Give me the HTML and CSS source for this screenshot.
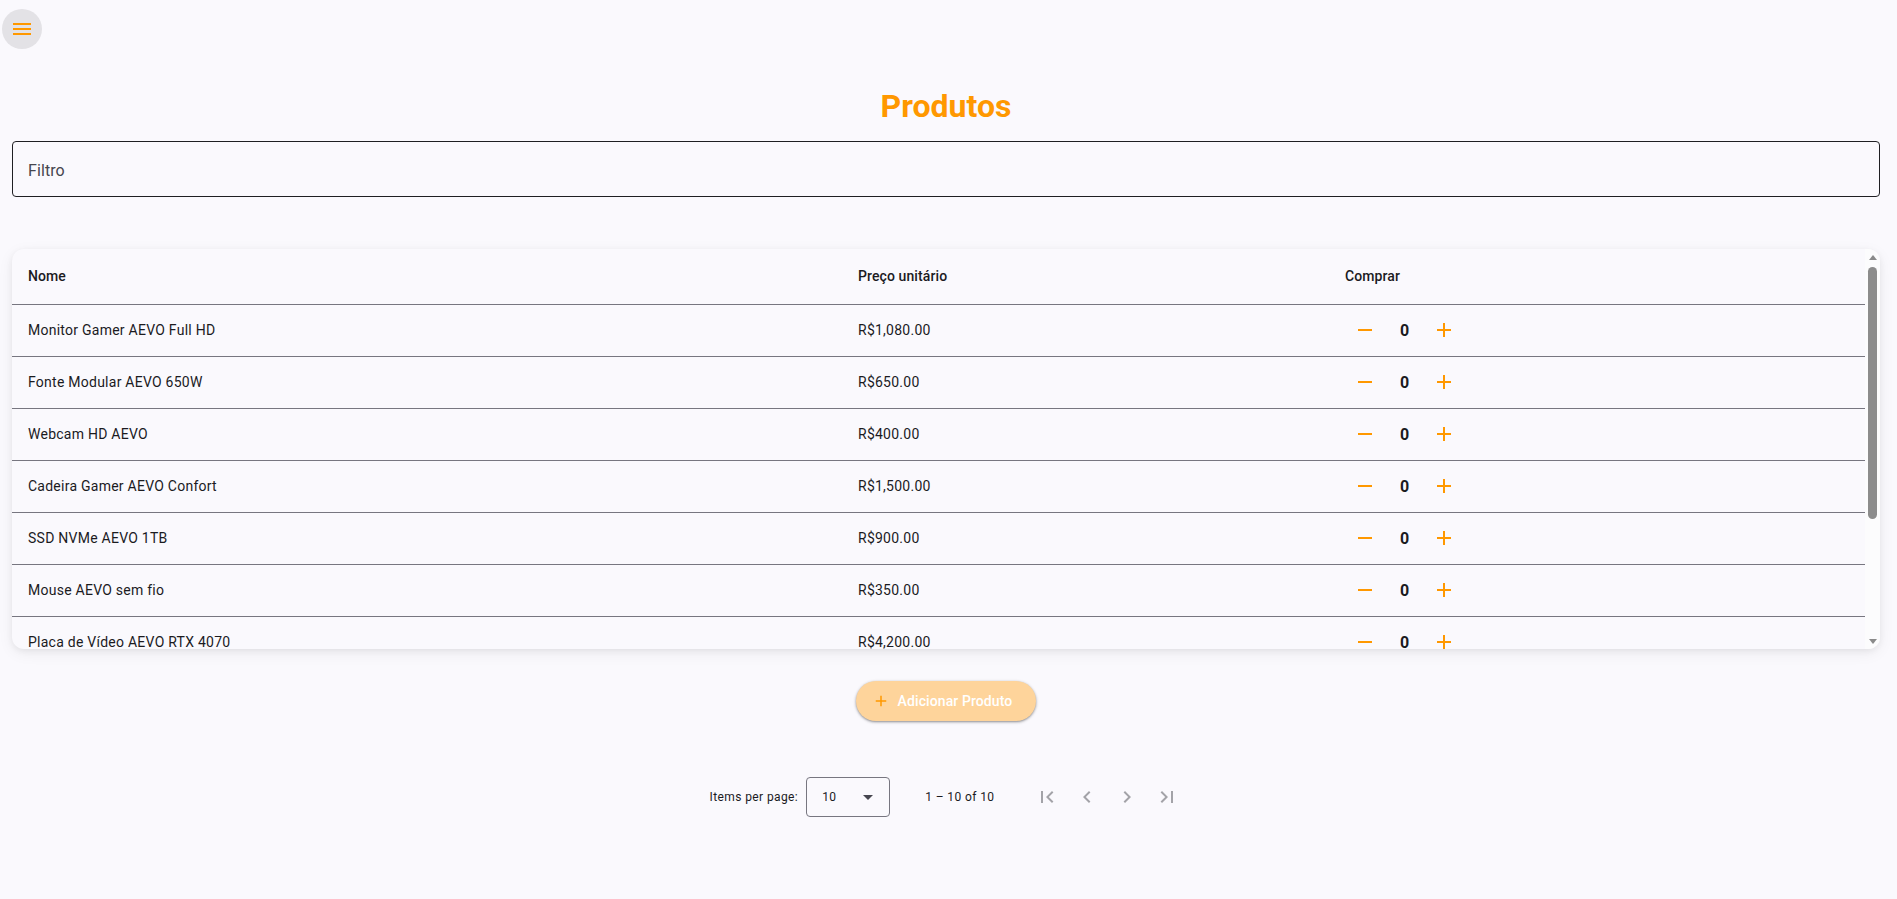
FILE: index.html
```html
<!DOCTYPE html>
<html lang="pt">
<head>
<meta charset="utf-8">
<title>Produtos</title>
<link rel="stylesheet" href="styles.css">
</head>
<body>
<header class="topbar">
  <button class="menu-btn" aria-label="Menu">
    <svg viewBox="0 0 24 24" width="24" height="24"><path d="M3 18h18v-2H3v2zm0-5h18v-2H3v2zm0-7v2h18V6H3z"/></svg>
  </button>
</header>
<main class="page">
  <h1 class="title">Produtos</h1>
  <div class="filter">
    <span class="filter-label">Filtro</span>
  </div>

  <section class="card">
    <div class="scroller">
      <table class="grid">
        <colgroup><col class="c-name"><col class="c-price"><col class="c-buy"></colgroup>
        <thead>
          <tr><th>Nome</th><th>Preço unitário</th><th>Comprar</th></tr>
        </thead>
        <tbody>
          <tr><td>Monitor Gamer AEVO Full HD</td><td>R$1,080.00</td><td><div class="qty"><button class="ib"><svg viewBox="0 0 24 24"><path d="M19 13H5v-2h14v2z"/></svg></button><span class="n">0</span><button class="ib"><svg viewBox="0 0 24 24"><path d="M19 13h-6v6h-2v-6H5v-2h6V5h2v6h6v2z"/></svg></button></div></td></tr>
          <tr><td>Fonte Modular AEVO 650W</td><td>R$650.00</td><td><div class="qty"><button class="ib"><svg viewBox="0 0 24 24"><path d="M19 13H5v-2h14v2z"/></svg></button><span class="n">0</span><button class="ib"><svg viewBox="0 0 24 24"><path d="M19 13h-6v6h-2v-6H5v-2h6V5h2v6h6v2z"/></svg></button></div></td></tr>
          <tr><td>Webcam HD AEVO</td><td>R$400.00</td><td><div class="qty"><button class="ib"><svg viewBox="0 0 24 24"><path d="M19 13H5v-2h14v2z"/></svg></button><span class="n">0</span><button class="ib"><svg viewBox="0 0 24 24"><path d="M19 13h-6v6h-2v-6H5v-2h6V5h2v6h6v2z"/></svg></button></div></td></tr>
          <tr><td>Cadeira Gamer AEVO Confort</td><td>R$1,500.00</td><td><div class="qty"><button class="ib"><svg viewBox="0 0 24 24"><path d="M19 13H5v-2h14v2z"/></svg></button><span class="n">0</span><button class="ib"><svg viewBox="0 0 24 24"><path d="M19 13h-6v6h-2v-6H5v-2h6V5h2v6h6v2z"/></svg></button></div></td></tr>
          <tr><td>SSD NVMe AEVO 1TB</td><td>R$900.00</td><td><div class="qty"><button class="ib"><svg viewBox="0 0 24 24"><path d="M19 13H5v-2h14v2z"/></svg></button><span class="n">0</span><button class="ib"><svg viewBox="0 0 24 24"><path d="M19 13h-6v6h-2v-6H5v-2h6V5h2v6h6v2z"/></svg></button></div></td></tr>
          <tr><td>Mouse AEVO sem fio</td><td>R$350.00</td><td><div class="qty"><button class="ib"><svg viewBox="0 0 24 24"><path d="M19 13H5v-2h14v2z"/></svg></button><span class="n">0</span><button class="ib"><svg viewBox="0 0 24 24"><path d="M19 13h-6v6h-2v-6H5v-2h6V5h2v6h6v2z"/></svg></button></div></td></tr>
          <tr><td>Placa de Vídeo AEVO RTX 4070</td><td>R$4,200.00</td><td><div class="qty"><button class="ib"><svg viewBox="0 0 24 24"><path d="M19 13H5v-2h14v2z"/></svg></button><span class="n">0</span><button class="ib"><svg viewBox="0 0 24 24"><path d="M19 13h-6v6h-2v-6H5v-2h6V5h2v6h6v2z"/></svg></button></div></td></tr>
          <tr><td>Teclado Mecânico AEVO</td><td>R$450.00</td><td><div class="qty"><button class="ib"><svg viewBox="0 0 24 24"><path d="M19 13H5v-2h14v2z"/></svg></button><span class="n">0</span><button class="ib"><svg viewBox="0 0 24 24"><path d="M19 13h-6v6h-2v-6H5v-2h6V5h2v6h6v2z"/></svg></button></div></td></tr>
          <tr><td>Headset AEVO 7.1</td><td>R$380.00</td><td><div class="qty"><button class="ib"><svg viewBox="0 0 24 24"><path d="M19 13H5v-2h14v2z"/></svg></button><span class="n">0</span><button class="ib"><svg viewBox="0 0 24 24"><path d="M19 13h-6v6h-2v-6H5v-2h6V5h2v6h6v2z"/></svg></button></div></td></tr>
          <tr><td>Gabinete AEVO RGB</td><td>R$520.00</td><td><div class="qty"><button class="ib"><svg viewBox="0 0 24 24"><path d="M19 13H5v-2h14v2z"/></svg></button><span class="n">0</span><button class="ib"><svg viewBox="0 0 24 24"><path d="M19 13h-6v6h-2v-6H5v-2h6V5h2v6h6v2z"/></svg></button></div></td></tr>
        </tbody>
      </table>
    </div>
    <div class="vbar" aria-hidden="true">
      <div class="vbar-btn"><span class="arrow-up"></span></div>
      <div class="vbar-track"><div class="vbar-thumb"></div></div>
      <div class="vbar-btn"><span class="arrow-down"></span></div>
    </div>
  </section>

  <div class="actions">
    <button class="add-btn">
      <svg viewBox="0 0 24 24" width="18" height="18"><path d="M19 13h-6v6h-2v-6H5v-2h6V5h2v6h6v2z"/></svg>
      <span>Adicionar Produto</span>
    </button>
  </div>

  <div class="paginator">
    <span class="pg-label">Items per page:</span>
    <div class="pg-select">
      <span>10</span>
      <span class="caret"></span>
    </div>
    <span class="pg-range">1 – 10 of 10</span>
    <div class="pg-nav">
      <button class="nb"><svg viewBox="0 0 24 24"><path d="M18.41 16.59L13.820 12l4.59-4.59L17 6l-6 6 6 6zM6 6h2v12H6z"/></svg></button>
      <button class="nb"><svg viewBox="0 0 24 24"><path d="M15.41 7.41L14 6l-6 6 6 6 1.41-1.41L10.83 12z"/></svg></button>
      <button class="nb"><svg viewBox="0 0 24 24"><path d="M10 6L8.59 7.41 13.17 12l-4.58 4.59L10 18l6-6z"/></svg></button>
      <button class="nb"><svg viewBox="0 0 24 24"><path d="M5.59 7.41L10.18 12l-4.59 4.59L7 18l6-6-6-6zM16 6h2v12h-2z"/></svg></button>
    </div>
  </div>
</main>
</body>
</html>
```

FILE: styles.css
```css
* { box-sizing: border-box; }

html, body {
  margin: 0;
  background: #faf9fd;
  font-family: Roboto, "Noto Sans", "Liberation Sans", sans-serif;
  color: #1b1b1f;
}

button {
  font-family: inherit;
  border: 0;
  background: none;
  padding: 0;
  margin: 0;
}

.topbar {
  padding: 9px 0 0 2px;
  height: 49px;
}

.menu-btn {
  width: 40px;
  height: 40px;
  border-radius: 50%;
  background: #e3e2e6;
  display: flex;
  align-items: center;
  justify-content: center;
}

.menu-btn svg { fill: #ff9800; display: block; }

.page {
  padding: 0 17px 0 12px;
}

.title {
  margin: 37px 0 0;
  height: 40px;
  line-height: 40px;
  font-size: 32px;
  font-weight: 700;
  color: #ff9800;
  text-align: center;
}

.filter {
  margin-top: 15px;
  height: 56px;
  border: 1px solid #1f1f23;
  border-radius: 4px;
  display: flex;
  align-items: center;
  padding: 0 15px;
}

.filter-label {
  font-size: 16px;
  color: #46464f;
  letter-spacing: 0.1px;
  padding-top: 2px;
}

.card {
  margin-top: 52px;
  height: 400px;
  border-radius: 12px;
  background: #faf9fd;
  box-shadow: 0 2px 6px rgba(0, 0, 0, 0.06), 0 4px 16px rgba(0, 0, 0, 0.06);
  overflow: hidden;
  display: flex;
}

.scroller {
  flex: 1;
  height: 400px;
  overflow-y: auto;
  scrollbar-width: none;
}

.scroller::-webkit-scrollbar { display: none; }

.vbar {
  width: 15px;
  flex: none;
  display: flex;
  flex-direction: column;
  background: #fcfcfd;
}

.vbar-btn {
  height: 15px;
  display: flex;
  align-items: center;
  justify-content: center;
}

.arrow-up, .arrow-down {
  width: 0;
  height: 0;
  border-left: 4.5px solid transparent;
  border-right: 4.5px solid transparent;
}

.arrow-up { border-bottom: 5px solid #8a8a8a; margin-top: 1px; }
.arrow-down { border-top: 5px solid #8a8a8a; margin-bottom: 1px; }

.vbar-track {
  flex: 1;
  padding: 3px 3px;
}

.vbar-thumb {
  height: 252px;
  border-radius: 5px;
  background: #8c8c8c;
}

.grid {
  width: 100%;
  border-collapse: collapse;
  font-size: 14px;
}

.c-name { width: 830px; }
.c-price { width: 487px; }

.grid th {
  height: 55px;
  text-align: left;
  font-weight: 500;
  padding: 0 16px;
  border-bottom: 1px solid #777680;
  letter-spacing: 0.1px;
}

.grid td {
  height: 52px;
  padding: 0 16px;
  border-bottom: 1px solid #777680;
  letter-spacing: 0.25px;
}

.qty {
  display: flex;
  align-items: center;
}

.ib {
  width: 40px;
  height: 40px;
  display: flex;
  align-items: center;
  justify-content: center;
}

.ib svg {
  width: 24px;
  height: 24px;
  fill: #ff9800;
  display: block;
}

.n {
  padding: 0 15px;
  font-size: 16px;
  font-weight: 700;
  width: 39px;
  text-align: center;
}

.actions {
  display: flex;
  justify-content: center;
  margin-top: 32px;
}

.add-btn {
  height: 40px;
  border-radius: 20px;
  background: #fed49b;
  color: #ffffff;
  display: flex;
  align-items: center;
  gap: 8px;
  padding: 0 24px 0 16px;
  font-size: 14px;
  font-weight: 500;
  letter-spacing: 0.1px;
  box-shadow: 0 1px 2px rgba(0, 0, 0, 0.3), 0 1px 3px 1px rgba(0, 0, 0, 0.12);
}

.add-btn svg { fill: #ff9800; display: block; }

.paginator {
  margin-top: 56px;
  display: flex;
  align-items: center;
  justify-content: center;
  font-size: 12px;
  letter-spacing: 0.4px;
  color: #1b1b1f;
  padding-left: 4px;
}

.pg-label { margin-right: 8px; }

.pg-select {
  width: 84px;
  height: 40px;
  border: 1px solid #777680;
  border-radius: 4px;
  display: flex;
  align-items: center;
  justify-content: space-between;
  padding: 0 16px 0 15px;
}

.caret {
  width: 0;
  height: 0;
  border-left: 5px solid transparent;
  border-right: 5px solid transparent;
  border-top: 5px solid #46464f;
}

.pg-range { margin: 0 32px 0 35px; }

.pg-nav { display: flex; }

.nb {
  width: 40px;
  height: 40px;
  display: flex;
  align-items: center;
  justify-content: center;
}

.nb svg {
  width: 24px;
  height: 24px;
  fill: #a3a3a8;
  display: block;
}
```
